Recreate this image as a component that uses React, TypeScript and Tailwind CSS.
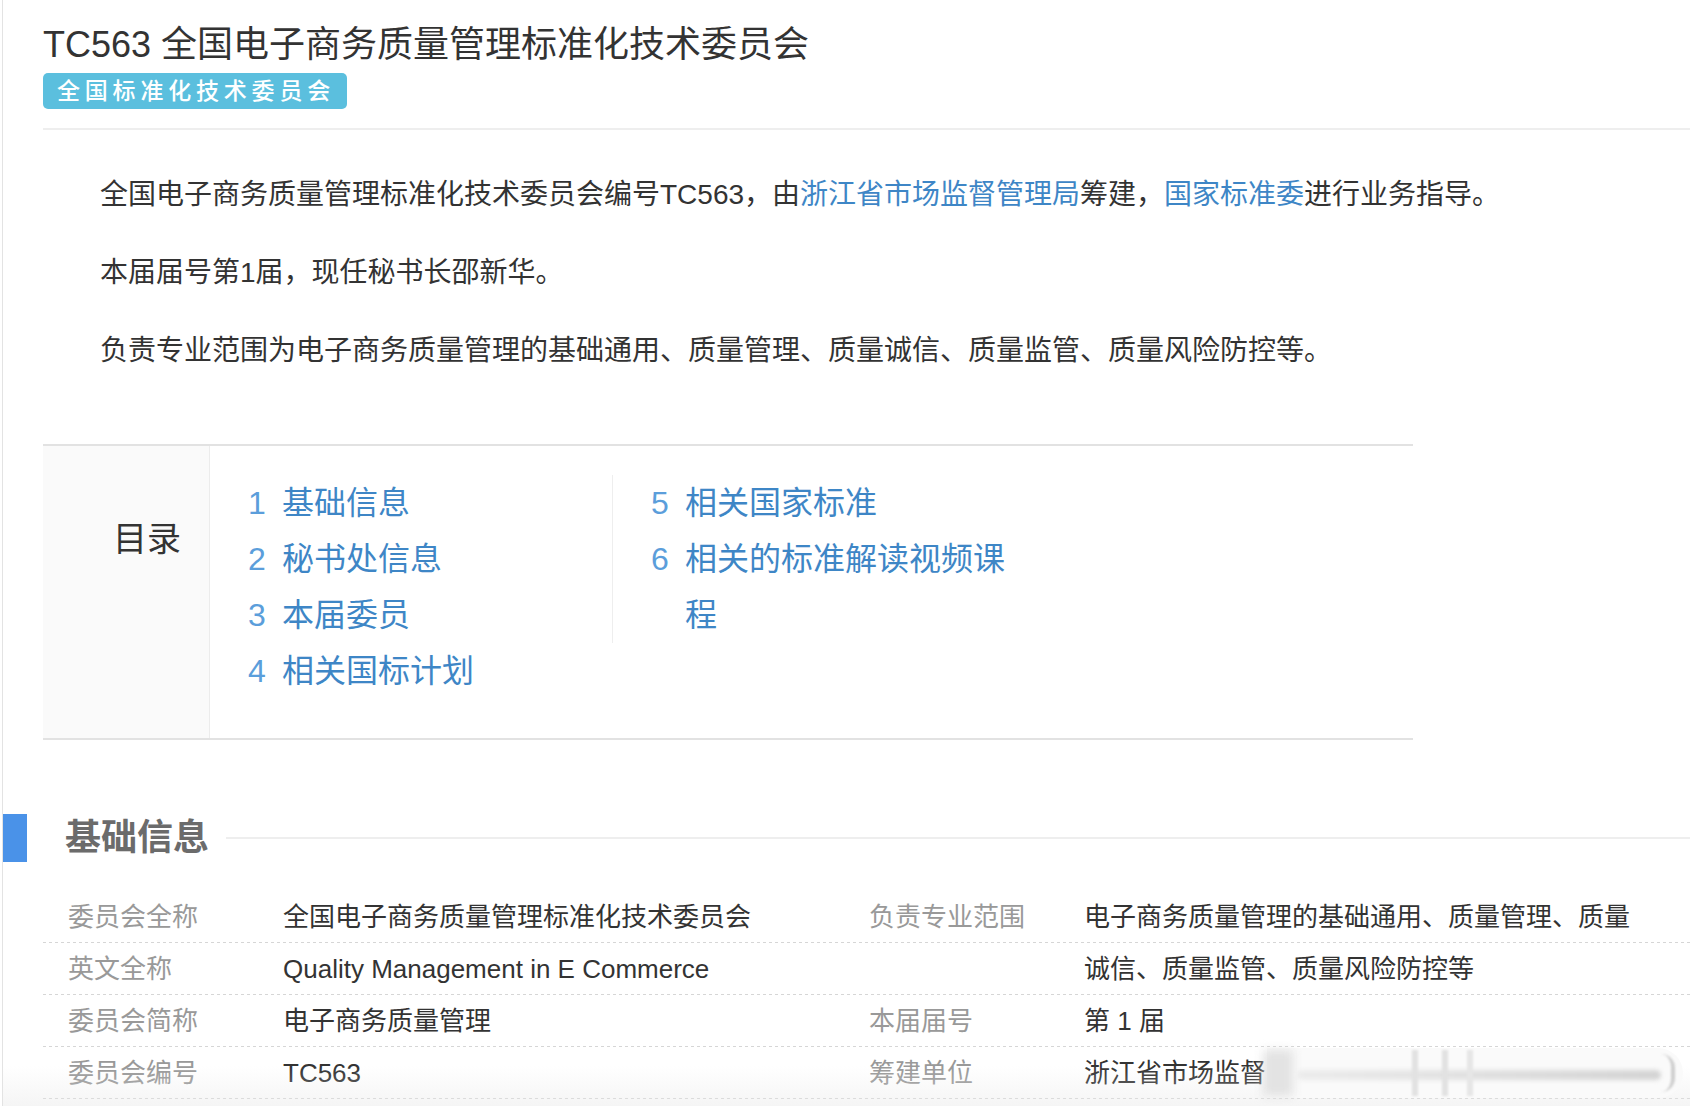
import React from "react";

// Table of contents entries, split into the two columns
const tocColumns = [
  [
    { n: 1, title: "基础信息" },
    { n: 2, title: "秘书处信息" },
    { n: 3, title: "本届委员" },
    { n: 4, title: "相关国标计划" },
  ],
  [
    { n: 5, title: "相关国家标准" },
    { n: 6, title: "相关的标准解读视频课程" },
  ],
];

const infoLeft = [
  { label: "委员会全称", value: "全国电子商务质量管理标准化技术委员会" },
  { label: "英文全称", value: "Quality Management in E Commerce" },
  { label: "委员会简称", value: "电子商务质量管理" },
  { label: "委员会编号", value: "TC563" },
];

const infoRight = [
  {
    label: "负责专业范围",
    value: "电子商务质量管理的基础通用、质量管理、质量诚信、质量监管、质量风险防控等",
  },
  { label: "本届届号", value: "第 1 届" },
  { label: "筹建单位", value: "浙江省市场监督管理局" },
];

type InfoItem = { label: string; value: string };

const InfoColumn = ({ items }: { items: InfoItem[] }) => (
  <dl className="w-[801px] pl-[25px]">
    {items.map((item) => (
      <div key={item.label} className="flex">
        <dt className="w-[215px] shrink-0 leading-[52px] text-[#999]">{item.label}</dt>
        <dd className="flex-1 leading-[52px] text-[#333]">{item.value}</dd>
      </div>
    ))}
  </dl>
);

export default function App() {
  return (
    <div
      className="relative ml-[2px] h-[1106px] overflow-hidden border-l border-[#e3e3e3] bg-white"
      style={{ fontFamily: '"Liberation Sans", "Noto Sans CJK SC", sans-serif' }}
    >
      {/* Header */}
      <div className="pl-[40px] pt-[23px]">
        <h1 className="text-[36px] leading-[44px] font-normal text-[#333]">
          TC563 全国电子商务质量管理标准化技术委员会
        </h1>
        <div className="mt-[6px] inline-flex h-[36px] items-center rounded-[5px] bg-[#5bbfde] pl-[14px] pr-[12px] text-[23px] font-medium tracking-[4.8px] text-white">
          全国标准化技术委员会
        </div>
        <div className="mt-[19px] border-t-2 border-[#eeeeee]" />

        {/* Summary paragraphs */}
        <div className="mt-[44px] flex flex-col gap-[36px] pl-[57px] text-[28px] leading-[42px] text-[#333]">
          <p>
            全国电子商务质量管理标准化技术委员会编号TC563，由
            <a className="text-[#3e86c6]">浙江省市场监督管理局</a>
            筹建，<a className="text-[#3e86c6]">国家标准委</a>进行业务指导。
          </p>
          <p>本届届号第1届，现任秘书长邵新华。</p>
          <p>负责专业范围为电子商务质量管理的基础通用、质量管理、质量诚信、质量监管、质量风险防控等。</p>
        </div>

        {/* Table of contents */}
        <div className="mt-[72px] flex w-[1370px] border-y-2 border-[#e2e2e2]">
          <div className="w-[167px] shrink-0 border-r border-[#ececec] bg-[#fafafa] pt-[65px] pl-[70px] text-[34px] leading-[56px] text-[#333]">
            目录
          </div>
          <div className="flex items-start pt-[29px] pb-[39px]">
            {tocColumns.map((col, i) => (
              <ul
                key={i}
                className={
                  i === 0
                    ? "w-[402px] pl-[38px]"
                    : "w-[402px] border-l border-[#eeeeee] pl-[38px]"
                }
              >
                {col.map((item) => (
                  <li key={item.n} className="flex text-[32px] leading-[56px]">
                    <span className="w-[34px] shrink-0 text-[#5b9edb]">{item.n}</span>
                    <span className="w-[330px] text-[#3e86c6]">{item.title}</span>
                  </li>
                ))}
              </ul>
            ))}
          </div>
        </div>
      </div>

      {/* Section heading */}
      <div className="mt-[74px] flex h-[48px] items-center">
        <div className="h-[48px] w-[24px] bg-[#4a92e8]" />
        <h2 className="ml-[38px] text-[36px] leading-[48px] font-bold text-[#6b6b6b]">基础信息</h2>
        <div className="ml-[17px] flex-1 border-t-2 border-[#eeeeee]" />
      </div>

      {/* Basic info table, dotted rules every 52px */}
      <div className="ml-[40px] mt-[29px] flex text-[26px] [background-image:linear-gradient(to_right,transparent_3px,#fff_3px),linear-gradient(to_bottom,transparent_51px,#d6d6d6_51px)] [background-size:6px_100%,100%_52px]">
        <InfoColumn items={infoLeft} />
        <InfoColumn items={infoRight} />
      </div>

      {/* Bottom haze and blurred bar */}
      <div className="pointer-events-none absolute inset-x-0 bottom-0 h-[40px] bg-linear-to-b from-white/0 to-[#e6e6e6]/40" />
      <div className="pointer-events-none absolute left-[1264px] top-[1048px] h-[50px] w-[416px] rounded-r-full bg-[#fafafa]">
        <div className="absolute -left-[4px] top-[2px] h-[46px] w-[30px] bg-[#d8d8d8]/70 blur-[5px]" />
        <div className="absolute left-[30px] right-[22px] top-[22px] h-[10px] rounded-full bg-linear-to-r from-[#ececec] to-[#d4d4d4] blur-[2px]" />
        <div className="absolute left-[145px] top-[2px] h-[46px] w-[6px] bg-[#e2e2e2] blur-[1px]" />
        <div className="absolute left-[175px] top-[2px] h-[46px] w-[6px] bg-[#e2e2e2] blur-[1px]" />
        <div className="absolute left-[200px] top-[2px] h-[46px] w-[6px] bg-[#e6e6e6] blur-[1px]" />
        <div className="absolute right-[8px] top-[6px] h-[38px] w-[14px] rounded-r-full border-r-4 border-[#cfcfcf] blur-[1px]" />
      </div>
    </div>
  );
}
